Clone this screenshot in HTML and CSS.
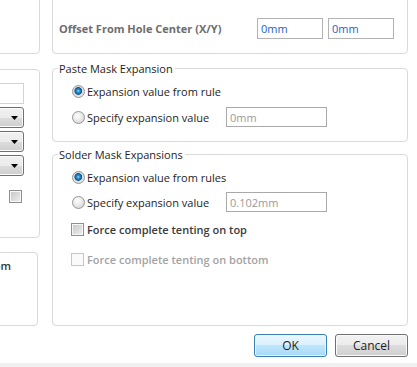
FILE: index.html
```html
<!DOCTYPE html>
<html lang="en">
<head>
  <meta charset="UTF-8" />
  <meta name="viewport" content="width=device-width, initial-scale=1.0"/>
  <title>Pad Properties</title>
  <link rel="stylesheet" href="styles.css">
</head>
<body>
  <div class="dialog">
    <div class="main">
      <div class="side">
        <div class="panel side-top"></div>
        <div class="panel side-mid">
          <div class="field"></div>
          <div class="combo"><svg width="7" height="4" viewBox="0 0 7 4"><polygon points="0,0 7,0 3.5,4" fill="#000"/></svg></div>
          <div class="combo"><svg width="7" height="4" viewBox="0 0 7 4"><polygon points="0,0 7,0 3.5,4" fill="#000"/></svg></div>
          <div class="combo"><svg width="7" height="4" viewBox="0 0 7 4"><polygon points="0,0 7,0 3.5,4" fill="#000"/></svg></div>
          <div class="side-check"><span class="check"></span></div>
        </div>
        <div class="panel side-low">
          <span class="side-text">on bottom</span>
        </div>
      </div>

      <div class="content">
        <div class="panel offset">
          <span class="offset-label">Offset From Hole Center (X/Y)</span>
          <input class="edit value" type="text" value="0mm" />
          <input class="edit value" type="text" value="0mm" />
        </div>

        <fieldset class="group paste">
          <legend>Paste Mask Expansion</legend>
          <div class="opt">
            <span class="radio on"></span>
            <span>Expansion value from rule</span>
          </div>
          <div class="opt">
            <span class="radio"></span>
            <span class="opt-text">Specify expansion value</span>
            <input class="edit off" type="text" value="0mm" disabled />
          </div>
        </fieldset>

        <fieldset class="group solder">
          <legend>Solder Mask Expansions</legend>
          <div class="opt">
            <span class="radio on"></span>
            <span>Expansion value from rules</span>
          </div>
          <div class="opt opt-short">
            <span class="radio"></span>
            <span class="opt-text">Specify expansion value</span>
            <input class="edit off" type="text" value="0.102mm" disabled />
          </div>
          <div class="opt opt-tall">
            <span class="check"></span>
            <span class="strong">Force complete tenting on top</span>
          </div>
          <div class="opt opt-tall">
            <span class="check disabled"></span>
            <span class="strong muted">Force complete tenting on bottom</span>
          </div>
        </fieldset>

        <div class="buttons">
          <button class="btn default" type="button">OK</button>
          <button class="btn" type="button">Cancel</button>
        </div>
      </div>
    </div>
    <div class="strip"></div>
  </div>
</body>
</html>
```

FILE: styles.css
```css
* {
  box-sizing: border-box;
}

body {
  margin: 0;
  background: #fff;
  font-family: "Open Sans", "Noto Sans", sans-serif;
  font-size: 11px;
  color: #1e1e1e;
  overflow: hidden;
}

.dialog {
  width: 417px;
  height: 367px;
  display: flex;
  flex-direction: column;
  overflow: hidden;
}

.main {
  flex: 1;
  display: flex;
  padding-right: 9px;
}

.strip {
  height: 4px;
  background: #f0f0f0;
}

.panel {
  border: 1px solid #d9d9d9;
  border-radius: 4px;
}

/* left column, mostly cut off */
.side {
  flex: none;
  width: 100px;
  margin-left: -60px;
  display: flex;
  flex-direction: column;
}

.side-top {
  margin-top: -10px;
  height: 64px;
}

.side-mid {
  margin-top: 15px;
  height: 169px;
  padding: 13px 15px 0 0;
  display: flex;
  flex-direction: column;
  align-items: flex-end;
}

.field {
  width: 60px;
  height: 21px;
  border: 1px solid #d3d3d3;
  background: #fff;
}

.combo {
  width: 60px;
  height: 21px;
  margin-top: 3px;
  border: 1px solid #707070;
  border-radius: 3px;
  background: linear-gradient(#f2f2f2, #ebebeb 50%, #dddddd 50%, #cfcfcf);
  box-shadow: inset 0 0 0 1px #fbfbfb;
  display: flex;
  align-items: center;
  justify-content: flex-end;
  padding-right: 5px;
}

.combo svg {
  display: block;
}

.side-check {
  margin-top: 14px;
  margin-right: -1px;
}

.side-low {
  margin-top: 14px;
  margin-right: 2px;
  height: 74px;
  padding: 5px 0 0 14px;
}

.side-text {
  font-weight: 600;
  color: #333;
}

/* right column */
.content {
  flex: none;
  width: 356px;
  margin-left: 12px;
  display: flex;
  flex-direction: column;
}

.offset {
  margin-top: -10px;
  height: 64px;
  display: flex;
  align-items: flex-end;
  padding: 0 0 14px 6px;
}

.offset-label {
  width: 198px;
  align-self: flex-end;
  line-height: 21px;
  font-weight: 700;
  color: #6d6d6d;
}

.edit {
  height: 21px;
  margin: 0;
  padding: 0 3px;
  border: 1px solid #b3b3b3;
  background: #fff;
  font: inherit;
  outline: none;
}

.value {
  width: 66px;
  color: #2462c2;
}

.value + .value {
  margin-left: 5px;
}

.off {
  width: 101px;
  height: 20px;
  color: #9a9a9a;
  border-color: #a9a9a9;
}

.group {
  margin: 0;
  min-width: 0;
  border: 1px solid #d9d9d9;
  border-radius: 4px;
  padding: 2px 0 0 19px;
}

.group legend {
  margin-left: -14px;
  padding: 0 2px 0 1px;
  line-height: 15px;
  color: #1e1e1e;
}

.paste {
  margin-top: 7px;
  padding-bottom: 11px;
}

.solder {
  margin-top: 5px;
  padding-bottom: 51px;
}

.opt {
  display: flex;
  align-items: center;
  height: 26px;
}

.opt-short {
  height: 24px;
}

.opt-tall {
  height: 30px;
}

.opt-text {
  width: 139px;
}

.radio {
  flex: none;
  width: 13px;
  height: 13px;
  margin-right: 2px;
  border-radius: 50%;
  border: 1px solid #959595;
  background: radial-gradient(circle at 40% 35%, #fdfdfd 0, #ebebeb 45%, #c9c9c9 100%);
}

.radio.on {
  background: radial-gradient(circle at 48% 45%, #9adcf8 0, #2b8fd0 1.5px, #0c5a8e 3.5px, #dcdcdc 4.2px, #f4f4f4 100%);
}

.check {
  flex: none;
  display: block;
  width: 13px;
  height: 13px;
  margin: 0 3px 0 -1px;
  border: 1px solid #8f8f8f;
  background: linear-gradient(135deg, #c6c6c6, #efefef);
  box-shadow: inset 0 0 0 1px #f7f7f7;
}

.check.disabled {
  border-color: #c6c6c6;
  background: #fafafa;
  box-shadow: none;
}

.strong {
  font-weight: 600;
  color: #3b3b3b;
}

.muted {
  color: #a3a3a3;
}

.buttons {
  margin-top: 8px;
  display: flex;
  justify-content: flex-end;
  gap: 8px;
}

.btn {
  width: 73px;
  height: 23px;
  margin: 0;
  padding: 0;
  border: 1px solid #707070;
  border-radius: 3px;
  background: linear-gradient(#f2f2f2, #ebebeb 50%, #dddddd 50%, #cfcfcf);
  box-shadow: inset 0 0 0 1px #fbfbfb;
  font: inherit;
  font-size: 12px;
  color: #1e1e1e;
}

.btn.default {
  border-color: #3c7fb1;
  background: linear-gradient(#eaf6fd, #d9f0fc 50%, #bee6fd 50%, #a7d9f5);
  box-shadow: inset 0 0 0 1px #e6f5fd;
}
```
